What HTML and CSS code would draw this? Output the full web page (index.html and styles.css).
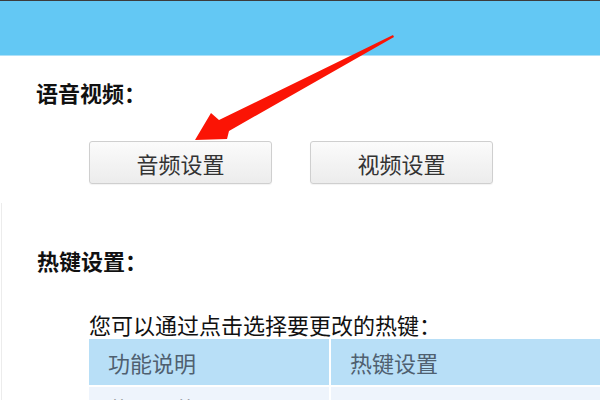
FILE: index.html
```html
<!DOCTYPE html>
<html lang="zh-CN">
<head>
<meta charset="utf-8">
<title>设置</title>
<link rel="stylesheet" href="styles.css">
</head>
<body>
<div class="topline"></div>
<div class="banner"></div>
<div class="content">
  <section class="sec1">
    <h2 class="title">语音视频：</h2>
    <div class="btnrow">
      <button class="btn">音频设置</button>
      <button class="btn">视频设置</button>
    </div>
  </section>
  <section class="sec2">
    <h2 class="title">热键设置：</h2>
    <p class="hint">您可以通过点击选择要更改的热键：</p>
    <div class="table">
      <div class="row head">
        <div class="cell c1">功能说明</div>
        <div class="cell c2">热键设置</div>
      </div>
      <div class="row body">
        <div class="cell c1">截取屏幕</div>
        <div class="cell c2">无</div>
      </div>
    </div>
  </section>
</div>
<svg class="arrow" width="600" height="400" viewBox="0 0 600 400">
  <polygon points="195,140 211,113 219,120 393,35 394,37 229,131 227,139" fill="#fb1405"/>
</svg>
</body>
</html>
```
FILE: styles.css
```css
html, body {
  margin: 0;
  padding: 0;
  background: #ffffff;
  width: 600px;
  height: 400px;
  overflow: hidden;
  font-family: "Noto Sans CJK SC", "Noto Sans", sans-serif;
}
.topline {
  height: 1px;
  background: #3c3c3c;
}
.banner {
  height: 54px;
  background: #63c8f4;
  border-bottom: 1px solid #aee0f7;
}
.content {
  display: flex;
  flex-direction: column;
}
.title {
  margin: 0;
  font-size: 22px;
  line-height: 24px;
  font-weight: bold;
  color: #111;
}
.sec1 {
  padding: 24px 0 0 36px;
  height: 123px;
}
.btnrow {
  display: flex;
  gap: 38px;
  margin: 37px 0 0 53px;
}
.btn {
  width: 183px;
  height: 43px;
  box-sizing: border-box;
  border: 1px solid #cfcfcf;
  border-radius: 3px;
  background: linear-gradient(#fbfbfb, #ececec);
  font-family: inherit;
  font-size: 22px;
  color: #333;
  padding: 0;
  box-shadow: 0 1px 1px rgba(0,0,0,0.05);
}
.sec2 {
  margin-left: 1px;
  border-left: 1px solid #ececec;
  padding: 45px 0 0 35px;
}
.hint {
  margin: 39px 0 0 52px;
  font-size: 22px;
  line-height: 26px;
  color: #111;
}
.table {
  margin: 2px 0 0 52px;
  width: 512px;
  display: flex;
  flex-direction: column;
  gap: 2px;
}
.row {
  display: flex;
  gap: 2px;
}
.cell {
  box-sizing: border-box;
  padding-left: 19px;
  font-size: 22px;
  display: flex;
  align-items: center;
}
.head .cell {
  height: 46px;
  background: #b8dff7;
  color: #4f6070;
}
.body .cell {
  height: 41px;
  background: #eef4fc;
  color: #555;
}
.c1 { width: 240px; }
.c2 { flex: 1; }
.arrow {
  position: absolute;
  left: 0;
  top: 0;
  pointer-events: none;
}
```
